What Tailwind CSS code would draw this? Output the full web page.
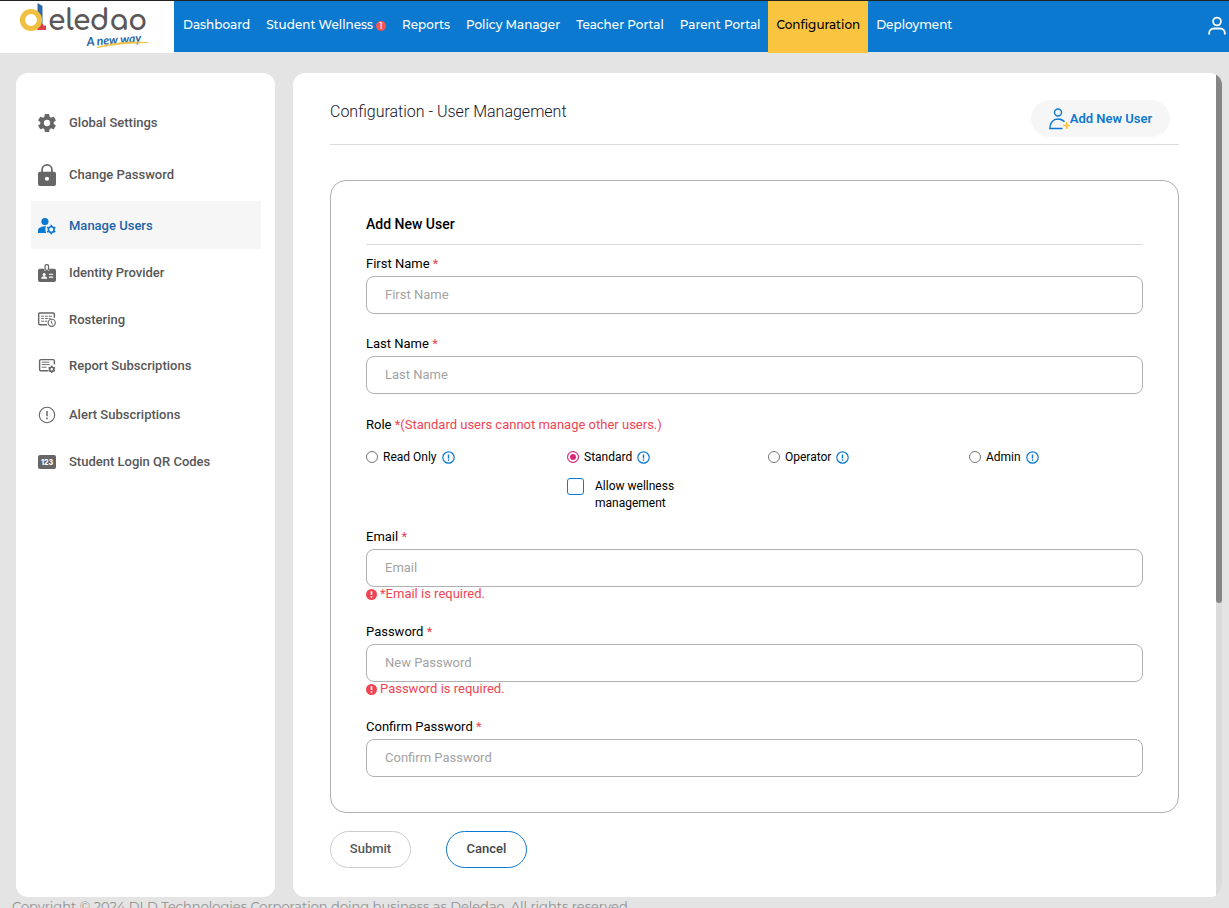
<!DOCTYPE html>
<html lang="en">
<head>
    <meta charset="UTF-8">
    <meta name="viewport" content="width=device-width, initial-scale=1.0">
    <title>Configuration - User Management</title>
    <script src="https://cdn.jsdelivr.net/npm/@tailwindcss/browser@4"></script>
</head>
<body class="h-screen overflow-hidden bg-[#e4e4e4] font-[Roboto,sans-serif] text-[13px] text-black">
    <header class="flex h-[53px] border-t border-[#222] font-[Montserrat,Inter,sans-serif] text-xs font-medium">
        <a href="#" aria-label="Deledao home" class="w-[174px] shrink-0 bg-white">
            <svg width="174" height="52" viewBox="0 1 174 52">
                <path d="M37.500 3l5 3v20h-5z" fill="#2e68ab"/>
                <path d="M39 24h4v1.500h3v4.500h-9z" fill="#dc4046"/>
                <circle cx="31" cy="20" r="8.500" fill="#fff" stroke="#f0bf41" stroke-width="5.200"/>
                <text x="48" y="30" font-family="Comfortaa, Quicksand, Poppins, Montserrat, sans-serif" font-size="28" font-weight="700" fill="#5c5758">eledao</text>
                <text x="87" y="46" font-family="Lato, sans-serif" font-size="12" font-weight="700" font-style="italic" fill="#1b64a9" transform="rotate(-4 87 46)">A new way</text>
                <path d="M97 47.500Q120 40 148 42.500Q122 42.500 97 47.500z" fill="#f0bf41" stroke="#f0bf41" stroke-width=".8"/>
            </svg>
        </a>
        <div class="flex h-[51px] grow items-stretch justify-between bg-[#0c79d1] text-white">
            <nav class="flex pl-px whitespace-nowrap">
                <a href="#" class="h-[51px] px-2 pt-[14px] leading-5">Dashboard</a>
                <a href="#" class="flex h-[51px] gap-[3px] px-2 pt-[14px] leading-5">Student Wellness
                    <span class="mt-[6px] size-[10px] rounded-full bg-[#f9564f] text-center text-[9px] leading-[10px]">1</span>
                </a>
                <a href="#" class="h-[51px] px-2 pt-[14px] leading-5">Reports</a>
                <a href="#" class="h-[51px] px-2 pt-[14px] leading-5">Policy Manager</a>
                <a href="#" class="h-[51px] px-2 pt-[14px] leading-5">Teacher Portal</a>
                <a href="#" class="h-[51px] px-2 pt-[14px] leading-5">Parent Portal</a>
                <a href="#" class="h-[52px] bg-[#f9c440] px-2 pt-[14px] leading-5 text-black">Configuration</a>
                <a href="#" class="h-[51px] px-2 pt-[14px] leading-5">Deployment</a>
            </nav>
            <button type="button" aria-label="Account" class="mr-[2px] pb-px">
                <svg width="20" height="20" viewBox="0 0 20 20" fill="none" stroke="#fff" stroke-width="1.800">
                    <circle cx="10" cy="5.500" r="3.900"/>
                    <path d="M2.200 18.500v-1.500a4.500 4.500 0 0 1 4.500-4.500h6.600a4.500 4.500 0 0 1 4.500 4.500v1.500"/>
                </svg>
            </button>
        </div>
    </header>

    <div class="flex gap-[18px] pt-5 pr-[7px] pl-4">
        <aside class="w-[259px] shrink-0 rounded-xl bg-white px-[15px] pt-6">
            <nav class="mr-[-1px] font-medium text-[#575757]">
                <a href="#" class="flex h-[50px] items-center gap-[13px] pt-0.5 pl-[7px]">
                    <svg width="18" height="18" viewBox="2 2 20 20" fill="#666"><path d="M19.430 12.980c.040-.320.070-.640.070-.980s-.030-.660-.070-.980l2.110-1.650c.190-.150.240-.420.120-.640l-2-3.460c-.120-.220-.390-.300-.610-.220l-2.490 1c-.520-.400-1.080-.730-1.690-.980l-.380-2.650C14.460 2.180 14.250 2 14 2h-4c-.250 0-.460.180-.490.420l-.380 2.650c-.610.250-1.170.590-1.690.980l-2.490-1c-.230-.090-.490 0-.610.220l-2 3.460c-.130.220-.070.490.120.640l2.110 1.650c-.040.320-.070.650-.070.980s.030.660.070.980l-2.110 1.650c-.190.150-.240.420-.120.640l2 3.460c.120.220.390.300.610.220l2.490-1c.520.400 1.080.730 1.690.980l.380 2.650c.030.240.240.420.490.420h4c.250 0 .460-.180.490-.420l.380-2.650c.610-.250 1.170-.590 1.690-.980l2.490 1c.230.090.490 0 .610-.220l2-3.460c.120-.220.070-.490-.120-.640zM12 15.500a3.500 3.500 0 1 1 0-7 3.500 3.500 0 0 1 0 7z"/></svg>
                    Global Settings
                </a>
                <a href="#" class="flex h-[54px] items-center gap-[13px] pt-0.5 pl-[7px]">
                    <svg width="18" height="24" viewBox="0 0 19 24"><path d="M4.300 9V6.500a5.200 5.200 0 0 1 10.400 0V9" fill="none" stroke="#666" stroke-width="1.800"/><rect y="8.500" width="19" height="15" rx="2" fill="#666"/><circle cx="9.500" cy="16" r="2.200" fill="#fff"/></svg>
                    Change Password
                </a>
                <a href="#" class="flex h-12 items-center gap-[13px] bg-[#f6f6f6] pt-0.5 pl-[7px] text-[#1c64a8]">
                    <svg width="18" height="18" viewBox="0 0 19 18"><circle cx="7.300" cy="4.300" r="3.800" fill="#0c79d1"/><path d="M0 16.500v-2.500C0 11 3 9.300 8.500 9.300c-.9 2-1 5 .3 7.200z" fill="#0c79d1"/><circle cx="14" cy="12.800" r="3" fill="none" stroke="#0c79d1" stroke-width="1.700"/><path d="M14 7.800v1.800M14 16v1.800M9.700 10.300l1.500.900M16.800 14.400l1.500.9M9.700 15.300l1.500-.9M16.800 11.200l1.500-.9" stroke="#0c79d1" stroke-width="1.800"/></svg>
                    Manage Users
                </a>
                <a href="#" class="flex h-[46px] items-center gap-[13px] pt-0.5 pl-[7px]">
                    <svg width="18" height="18" viewBox="0 0 19 19"><path d="M2 5h4.800v2.500h5V5H17a2 2 0 0 1 2 2v10a2 2 0 0 1-2 2H2a2 2 0 0 1-2-2V7a2 2 0 0 1 2-2z" fill="#666"/><rect x="7.500" y=".7" width="3.600" height="6" rx="1.300" fill="#fff" stroke="#666" stroke-width="1.300"/><circle cx="6.500" cy="11" r="1.600" fill="#fff"/><path d="M3.300 15.700c0-2 1.500-2.700 3.200-2.700s3.200.7 3.200 2.700zM11.500 10.200h4.500v1.200h-4.500zM11.500 13.200h4.500v1.200h-4.500z" fill="#fff"/></svg>
                    Identity Provider
                </a>
                <a href="#" class="flex h-12 items-center gap-[13px] pt-0.5 pl-[7px]">
                    <svg width="18" height="16" viewBox="0 0 19 16" fill="none" stroke="#666"><path d="M9.500 13H2A1.300 1.300 0 0 1 .7 11.700V2A1.300 1.300 0 0 1 2 .7h14A1.300 1.300 0 0 1 17.300 2v3.500" stroke-width="1.500"/><path d="M3.300 4h3M7.300 4h3M11.300 4h3.500M3.300 6.500h3M7.300 6.500h3M11.300 6.500h2M3.300 9.300h3M7.300 9.300h2.500"/><circle cx="14.500" cy="11" r="3.800" stroke-width="1.200"/><path d="M14.200 8.700v2.500l1.700 1.500"/></svg>
                    Rostering
                </a>
                <a href="#" class="flex h-[46px] items-center gap-[13px] pl-[7px]">
                    <svg width="18" height="16" viewBox="0 0 19 16" fill="none" stroke="#666"><path d="M10.500 13H3A1.300 1.300 0 0 1 1.700 11.700V2.600A1.300 1.300 0 0 1 3 1.300h13A1.300 1.300 0 0 1 17.300 2.600v3.500" stroke-width="1.500"/><path d="M4 4h8M4 6.500h8.500M4 9.300h5"/><circle cx="14.500" cy="11.500" r="2.200" stroke-width="1.800"/><path d="M14.500 7.600v1.600M14.500 13.800v1.600M11.100 9.600l1.400.8M16.500 12.600l1.400.8M11.100 13.400l1.400-.8M16.500 10.400l1.400-.8" stroke-width="1.600"/></svg>
                    Report Subscriptions
                </a>
                <a href="#" class="flex h-[50px] items-center gap-[13px] pt-0.5 pl-[7px]">
                    <svg width="18" height="18" viewBox="0 0 18 18" fill="none" stroke="#666"><circle cx="9" cy="9" r="7.700" stroke-width="1.100"/><path d="M9 5v5.200M9 11.500v1.700" stroke-width="1.500"/></svg>
                    Alert Subscriptions
                </a>
                <a href="#" class="flex h-[46px] items-center gap-[13px] pl-[7px]">
                    <svg width="18" height="14" viewBox="0 0 18 14"><rect width="18" height="14" rx="2" fill="#666"/><text x="9" y="9.500" text-anchor="middle" font-family="Inter, sans-serif" font-size="7" font-weight="800" fill="#fff">123</text></svg>
                    Student Login QR Codes
                </a>
            </nav>
        </aside>

        <main class="flex grow overflow-hidden rounded-xl bg-white">
            <div class="grow px-[37px] pt-[27px] pb-[29px]">
                <div class="flex h-[45px] items-start justify-between border-b border-[#dadada] pr-[9px]">
                    <h1 class="text-base leading-6 font-light text-[#14142b]">Configuration - User Management</h1>
                    <button type="button" class="flex h-[37px] w-[139px] items-center justify-center rounded-full bg-[#f6f6f6] font-semibold text-[#0c79d1]">
                        <svg width="21" height="22" viewBox="0 0 21 22" fill="none" stroke="#0c79d1" stroke-width="1.400"><circle cx="9" cy="4.500" r="3.500"/><path d="M13.500 20.500H.8c0-5.500 3.200-9.500 8.200-9.500 2.800 0 5 1 6.500 2.800"/><path d="M17.700 14v7M14.200 17.500h7" stroke="#f9c440" stroke-width="1.700"/></svg>
                        Add New User
                    </button>
                </div>

                <form id="add-user" class="mt-[35px] rounded-2xl border border-[#b0b0b0] px-[35px] pt-[33px] pb-[35px]">
                    <h2 class="border-b border-[#dadada] pb-[10px] text-sm leading-5 font-medium">Add New User</h2>

                    <label for="first-name" class="mt-[9px] block leading-5">First Name <span class="text-[#f04452]">*</span></label>
                    <input id="first-name" type="text" placeholder="First Name" class="mt-[2px] block h-[38px] w-full rounded-lg border border-[#b0b0b0] px-[18px] pb-0.5 placeholder:text-[#a3a3a3]">

                    <label for="last-name" class="mt-5 block leading-5">Last Name <span class="text-[#f04452]">*</span></label>
                    <input id="last-name" type="text" placeholder="Last Name" class="mt-[2px] block h-[38px] w-full rounded-lg border border-[#b0b0b0] px-[18px] pb-0.5 placeholder:text-[#a3a3a3]">

                    <fieldset class="mt-[21px]">
                        <legend class="leading-5">Role <span class="text-[#f04452]">*(Standard users cannot manage other users.)</span></legend>
                        <div class="mt-3 grid grid-cols-4 gap-x-[27px] text-xs">
                            <div class="flex h-5 items-center gap-[5px]">
                                <input id="role-read" type="radio" name="role" class="size-3 appearance-none rounded-full border border-[#777] checked:border-[#db2777] checked:bg-[#db2777] checked:inset-ring-2 checked:inset-ring-white">
                                <label for="role-read">Read Only</label>
                                <svg width="13" height="13" viewBox="0 0 13 13" fill="none" stroke="#0c79d1"><circle cx="6.500" cy="6.500" r="5.700" stroke-width="1.200"/><path d="M6.500 3.500v4M6.500 8.300v1.400" stroke-width="1.400"/></svg>
                            </div>
                            <div>
                                <div class="flex h-5 items-center gap-[5px]">
                                    <input id="role-standard" type="radio" name="role" checked class="size-3 appearance-none rounded-full border border-[#777] checked:border-[#db2777] checked:bg-[#db2777] checked:inset-ring-2 checked:inset-ring-white">
                                    <label for="role-standard">Standard</label>
                                    <svg width="13" height="13" viewBox="0 0 13 13" fill="none" stroke="#0c79d1"><circle cx="6.500" cy="6.500" r="5.700" stroke-width="1.200"/><path d="M6.500 3.500v4M6.500 8.300v1.400" stroke-width="1.400"/></svg>
                                </div>
                                <div class="mt-[11px] flex items-start gap-[11px]">
                                    <input id="wellness" type="checkbox" class="size-[17px] shrink-0 appearance-none rounded-[3px] border border-[#0c79d1] checked:bg-[#0c79d1]">
                                    <label for="wellness" class="w-24 leading-[17px]">Allow wellness management</label>
                                </div>
                            </div>
                            <div class="flex h-5 items-center gap-[5px]">
                                <input id="role-operator" type="radio" name="role" class="size-3 appearance-none rounded-full border border-[#777] checked:border-[#db2777] checked:bg-[#db2777] checked:inset-ring-2 checked:inset-ring-white">
                                <label for="role-operator">Operator</label>
                                <svg width="13" height="13" viewBox="0 0 13 13" fill="none" stroke="#0c79d1"><circle cx="6.500" cy="6.500" r="5.700" stroke-width="1.200"/><path d="M6.500 3.500v4M6.500 8.300v1.400" stroke-width="1.400"/></svg>
                            </div>
                            <div class="flex h-5 items-center gap-[5px]">
                                <input id="role-admin" type="radio" name="role" class="size-3 appearance-none rounded-full border border-[#777] checked:border-[#db2777] checked:bg-[#db2777] checked:inset-ring-2 checked:inset-ring-white">
                                <label for="role-admin">Admin</label>
                                <svg width="13" height="13" viewBox="0 0 13 13" fill="none" stroke="#0c79d1"><circle cx="6.500" cy="6.500" r="5.700" stroke-width="1.200"/><path d="M6.500 3.500v4M6.500 8.300v1.400" stroke-width="1.400"/></svg>
                            </div>
                        </div>
                    </fieldset>

                    <label for="email" class="mt-[15px] block leading-5">Email <span class="text-[#f04452]">*</span></label>
                    <input id="email" type="email" placeholder="Email" class="mt-[2px] block h-[38px] w-full rounded-lg border border-[#b0b0b0] px-[18px] pb-0.5 placeholder:text-[#a3a3a3]">
                    <p class="flex h-[14px] items-center gap-[3px] leading-[14px] text-[#f04452]">
                        <svg width="11" height="11" viewBox="0 0 10 10"><circle cx="5" cy="5" r="5" fill="#f04452"/><path d="M5 2v3.500M5 6.500v1.500" stroke="#fff" stroke-width="1.500"/></svg>
                        *Email is required.
                    </p>

                    <label for="password" class="mt-[21px] block leading-5">Password <span class="text-[#f04452]">*</span></label>
                    <input id="password" type="password" placeholder="New Password" class="mt-[2px] block h-[38px] w-full rounded-lg border border-[#b0b0b0] px-[18px] pb-0.5 placeholder:text-[#a3a3a3]">
                    <p class="flex h-[14px] items-center gap-[3px] leading-[14px] text-[#f04452]">
                        <svg width="11" height="11" viewBox="0 0 10 10"><circle cx="5" cy="5" r="5" fill="#f04452"/><path d="M5 2v3.500M5 6.500v1.500" stroke="#fff" stroke-width="1.500"/></svg>
                        Password is required.
                    </p>

                    <label for="confirm" class="mt-[21px] block leading-5">Confirm Password <span class="text-[#f04452]">*</span></label>
                    <input id="confirm" type="password" placeholder="Confirm Password" class="mt-[2px] block h-[38px] w-full rounded-lg border border-[#b0b0b0] px-[18px] pb-0.5 placeholder:text-[#a3a3a3]">
                </form>

                <div class="mt-[18px] flex gap-[35px] font-medium text-[#444]">
                    <button type="submit" form="add-user" class="h-[37px] w-[81px] rounded-full border border-[#ccc] pb-0.5 text-[#575757]">Submit</button>
                    <button type="button" class="h-[37px] w-[81px] rounded-full border border-[#0c79d1] pb-0.5">Cancel</button>
                </div>
            </div>
            <div class="w-[6px] shrink-0 bg-[#dcdcdc]">
                <div class="h-[530px] rounded-b-full bg-[#858585]"></div>
            </div>
        </main>
    </div>

    <footer class="pl-3 font-[Montserrat,Inter,sans-serif] leading-[18px] text-[#8f8f8f]">Copyright © 2024 DLD Technologies Corporation doing business as Deledao. All rights reserved.</footer>
</body>
</html>
